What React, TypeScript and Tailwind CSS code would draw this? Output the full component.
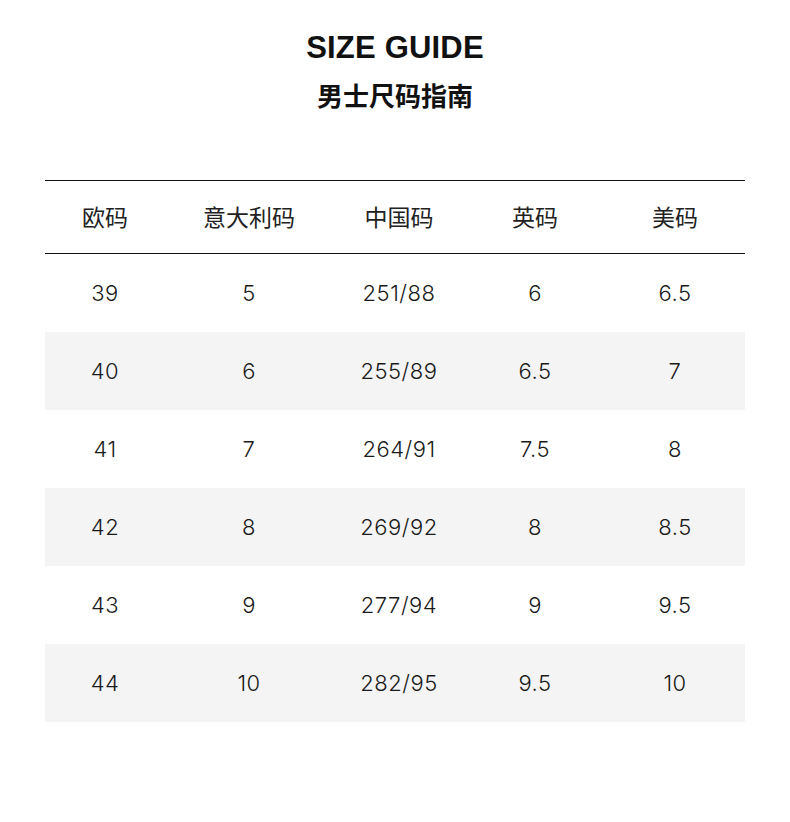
const HEADERS = ['欧码', '意大利码', '中国码', '英码', '美码'];

const ROWS = [
  ['39', '5', '251/88', '6', '6.5'],
  ['40', '6', '255/89', '6.5', '7'],
  ['41', '7', '264/91', '7.5', '8'],
  ['42', '8', '269/92', '8', '8.5'],
  ['43', '9', '277/94', '9', '9.5'],
  ['44', '10', '282/95', '9.5', '10'],
];

const COL_WIDTHS = ['w-[120px]', 'w-[168px]', 'w-[132px]', 'w-[140px]', 'w-[140px]'];

export default function App() {
  return (
    <div className="min-h-[822px] w-[790px] bg-white text-[#111] font-['Liberation_Sans','Noto_Sans_CJK_SC',sans-serif]">
      <div className="pt-[30px] text-center">
        <h1 className="text-[31px] leading-[36px] font-bold tracking-[0.2px]">SIZE GUIDE</h1>
        <h2 className="mt-[13px] text-[26px] leading-[32px] font-bold font-['Noto_Sans_CJK_SC',sans-serif]">
          男士尺码指南
        </h2>
      </div>

      <div className="mx-[45px] mt-[69px]">
        <table className="w-full table-fixed border-collapse">
          <colgroup>
            {COL_WIDTHS.map((w, i) => (
              <col key={i} className={w} />
            ))}
          </colgroup>
          <thead>
            <tr className="h-[73px] border-y border-[#111]">
              {HEADERS.map((h) => (
                <th
                  key={h}
                  className="p-0 pb-[1px] text-center text-[23px] font-normal text-[#222] font-['Noto_Sans_CJK_SC',sans-serif]"
                >
                  {h}
                </th>
              ))}
            </tr>
          </thead>
          <tbody>
            {ROWS.map((row, i) => (
              <tr key={row[0]} className={`h-[78px] ${i % 2 === 1 ? 'bg-[#f4f4f4]' : 'bg-white'}`}>
                {row.map((cell, j) => (
                  <td
                    key={j}
                    className="p-0 pt-[2px] text-center text-[22px] text-[#1a1a1a] tracking-[0.5px] font-['Inter','Noto_Sans',sans-serif] font-light"
                  >
                    {cell}
                  </td>
                ))}
              </tr>
            ))}
          </tbody>
        </table>
      </div>
    </div>
  );
}
